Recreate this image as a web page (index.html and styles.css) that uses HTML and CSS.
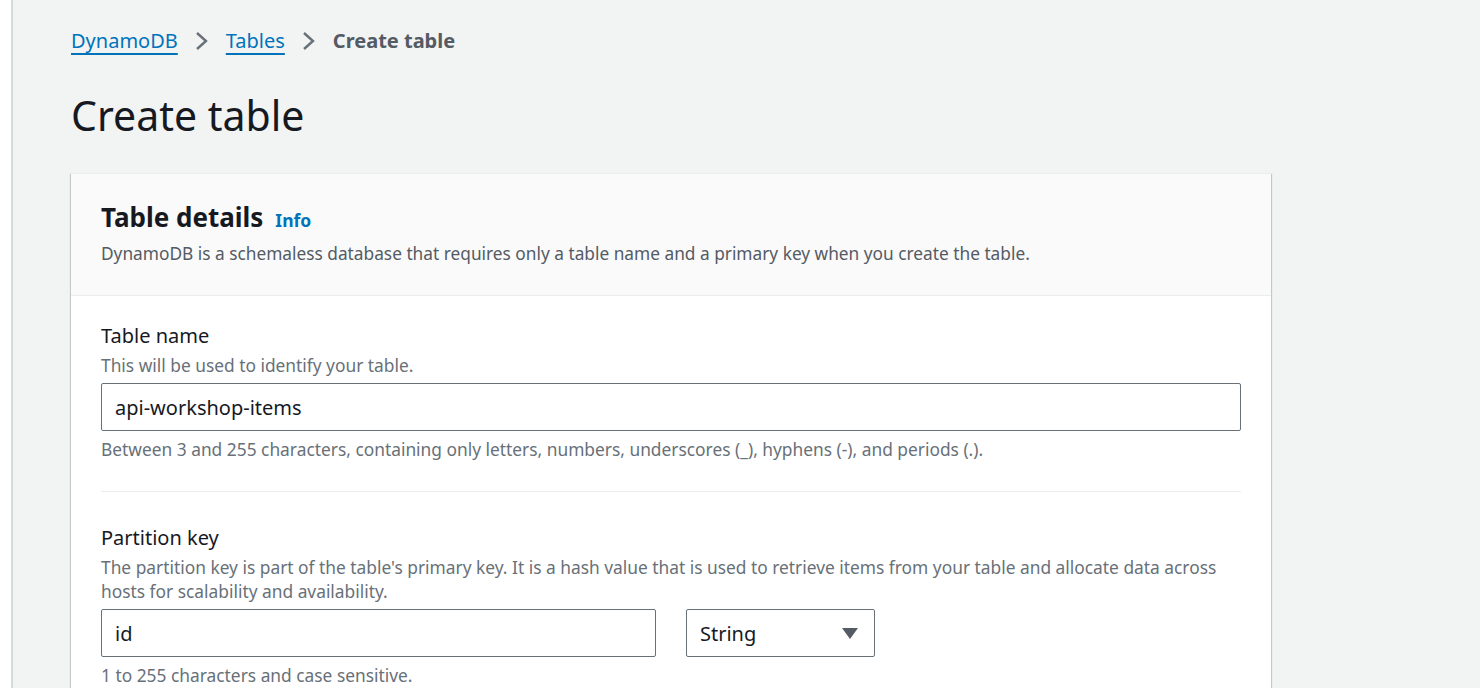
FILE: index.html
```html
<!DOCTYPE html>
<html lang="en">
<head>
<meta charset="utf-8">
<title>Create table</title>
<link rel="stylesheet" href="styles.css">
</head>
<body>
<div class="layout">
  <aside class="nav-rail"></aside>
  <main class="main">
    <nav class="breadcrumbs">
      <a href="#" class="crumb-link">DynamoDB</a>
      <span class="chevron"><svg width="14" height="20" viewBox="0 0 14 20"><polyline points="2,2 11,10 2,18" fill="none" stroke="#687078" stroke-width="2.4"/></svg></span>
      <a href="#" class="crumb-link">Tables</a>
      <span class="chevron"><svg width="14" height="20" viewBox="0 0 14 20"><polyline points="2,2 11,10 2,18" fill="none" stroke="#687078" stroke-width="2.4"/></svg></span>
      <span class="crumb-current">Create table</span>
    </nav>
    <h1 class="page-title">Create table</h1>
    <section class="card">
      <header class="card-header">
        <h2 class="card-title">Table details <a href="#" class="info-link">Info</a></h2>
        <p class="card-desc">DynamoDB is a schemaless database that requires only a table name and a primary key when you create the table.</p>
      </header>
      <div class="card-body">
        <div class="field">
          <div class="field-label">Table name</div>
          <div class="field-desc">This will be used to identify your table.</div>
          <div class="input full">api-workshop-items</div>
          <div class="field-hint">Between 3 and 255 characters, containing only letters, numbers, underscores (_), hyphens (-), and periods (.).</div>
        </div>
        <div class="divider"></div>
        <div class="field">
          <div class="field-label">Partition key</div>
          <div class="field-desc">The partition key is part of the table's primary key. It is a hash value that is used to retrieve items from your table and allocate data across hosts for scalability and availability.</div>
          <div class="input-row">
            <div class="input key">id</div>
            <div class="select">
              <span>String</span>
              <svg width="16" height="11" viewBox="0 0 16 11"><polygon points="0,0 16,0 8,11" fill="#545b64"/></svg>
            </div>
          </div>
          <div class="field-hint">1 to 255 characters and case sensitive.</div>
        </div>
      </div>
    </section>
  </main>
</div>
</body>
</html>
```

FILE: styles.css
```css
* { box-sizing: border-box; }
html, body {
  margin: 0;
  height: 100%;
}
body {
  font-family: "Noto Sans", "Open Sans", Arial, sans-serif;
  color: #16191f;
  background: #f2f3f3;
  overflow: hidden;
}
.layout {
  display: flex;
  height: 100%;
  overflow: hidden;
}
.nav-rail {
  width: 13px;
  flex: none;
  background: #ffffff;
  border-right: 2px solid #d5dbdb;
}
.main {
  flex: 1;
  padding: 29px 0 0 58px;
}
.breadcrumbs {
  display: flex;
  align-items: center;
  height: 24px;
  font-size: 20px;
  line-height: 24px;
}
.crumb-link {
  color: #0073bb;
  text-decoration: underline;
  text-decoration-thickness: 2px;
  text-underline-offset: 5px;
}
.chevron {
  display: flex;
  align-items: center;
  width: 14px;
  margin: 0 17px;
}
.crumb-current {
  color: #545b64;
  font-weight: 700;
}
.page-title {
  margin: 37px 0 0;
  font-size: 41px;
  line-height: 50px;
  font-weight: 400;
  color: #16191f;
}
.card {
  margin-top: 33px;
  width: 1200px;
  background: #ffffff;
  box-shadow: 0 1px 1px 0 rgba(0,28,36,0.3), 1px 1px 1px 0 rgba(0,28,36,0.15), -1px 1px 1px 0 rgba(0,28,36,0.15);
  border-top: 1px solid #eaeded;
}
.card-header {
  background: #fafafa;
  padding: 27px 30px 29px;
  border-bottom: 1px solid #eaeded;
}
.card-title {
  margin: 0;
  font-size: 26px;
  line-height: 32px;
  font-weight: 700;
  display: flex;
  align-items: baseline;
}
.info-link {
  margin-left: 12px;
  font-size: 17.5px;
  color: #0073bb;
  text-decoration: none;
  font-weight: 700;
}
.card-desc {
  margin: 6px 0 0;
  font-size: 17.3px;
  line-height: 24px;
  color: #545b64;
}
.card-body {
  padding: 28px 30px 40px;
}
.field-label {
  font-size: 20px;
  line-height: 24px;
  color: #16191f;
}
.field-desc {
  margin-top: 5px;
  font-size: 17.35px;
  line-height: 24px;
  color: #687078;
}
.input {
  margin-top: 6px;
  height: 48px;
  border: 1px solid #687078;
  border-radius: 2px;
  padding: 0 13px;
  display: flex;
  align-items: center;
  font-size: 20px;
  color: #16191f;
  background: #ffffff;
}
.input.full { width: 100%; }
.input-row {
  display: flex;
  gap: 30px;
  margin-top: 6px;
}
.input-row .input { margin-top: 0; }
.input.key { width: 555px; }
.select {
  width: 189px;
  height: 48px;
  border: 1px solid #687078;
  border-radius: 2px;
  padding: 0 16px 0 13px;
  display: flex;
  align-items: center;
  justify-content: space-between;
  font-size: 20px;
  color: #16191f;
}
.field-hint {
  margin-top: 6px;
  font-size: 17.35px;
  line-height: 24px;
  color: #687078;
}
.divider {
  margin: 30px 0 34px;
  border-top: 1px solid #eaeded;
}
```
